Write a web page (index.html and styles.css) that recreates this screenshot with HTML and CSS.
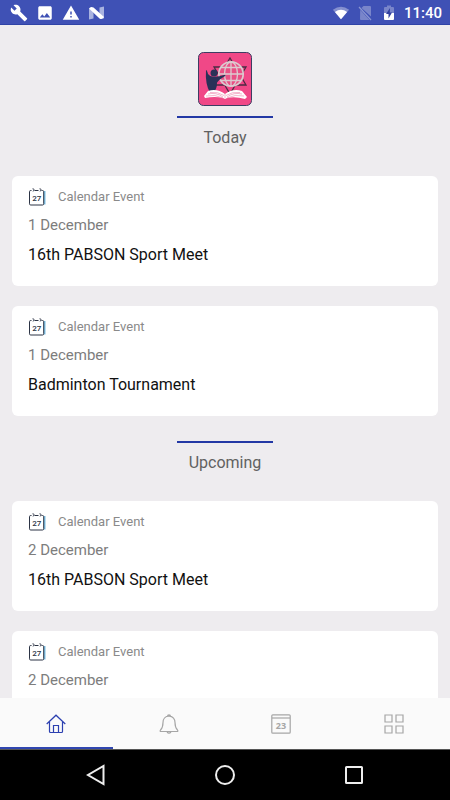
FILE: index.html
```
<!DOCTYPE html>
<html lang="en">
<head>
<meta charset="utf-8">
<meta name="viewport" content="width=device-width, initial-scale=1">
<title>Events</title>
<link rel="stylesheet" href="styles.css">
</head>
<body>
<svg class="defs" aria-hidden="true">
  <symbol id="calendar" viewBox="0 0 18 18">
    <path d="M16.700 3v13.500" stroke="#7cbfe2" stroke-width="1.600" fill="none"/>
    <path d="M3.500 2.500H2.700Q1.500 2.500 1.500 3.700V15.800Q1.500 17 2.700 17H14.500Q15.700 17 15.700 15.800V3.700Q15.700 2.500 14.500 2.500H13.500M6.500 2.500H10.500" fill="none" stroke="#2b3344" stroke-width="1"/>
    <path d="M4.500 .8q1.500-.3 1.500 1T4.800 3.300M11.500 .8q1.500-.3 1.500 1T11.800 3.300" fill="none" stroke="#2b3344" stroke-width=".9"/>
    <text x="8.800" y="12.500" text-anchor="middle" class="cal-number">27</text>
  </symbol>
</svg>

<header class="status">
  <div class="status-group notices">
    <svg width="18" height="18" viewBox="0 0 24 24" fill="#fff"><path d="M22.700 19l-9.100-9.100c.9-2.300.4-5-1.500-6.900-2-2-5-2.400-7.400-1.300L9 6 6 9 1.600 4.700C.4 7.100.9 10.100 2.900 12.100c1.900 1.900 4.600 2.400 6.900 1.500l9.100 9.100c.4.4 1 .4 1.400 0l2.300-2.300c.5-.4.5-1.100.1-1.400z"/></svg>
    <svg width="18" height="18" viewBox="0 0 24 24" fill="#fff"><path d="M21 19V5c0-1.100-.9-2-2-2H5c-1.100 0-2 .9-2 2v14c0 1.100.9 2 2 2h14c1.100 0 2-.9 2-2zM8.500 13.500l2.500 3 3.500-4.500 4.500 6H5l3.500-4.500z"/></svg>
    <svg width="18" height="18" viewBox="0 0 24 24" fill="#fff"><path d="M1 21h22L12 2 1 21zm12-3h-2v-2h2v2zm0-4h-2v-4h2v4z"/></svg>
    <svg width="18" height="18" viewBox="0 0 18 18"><path d="M1 4.500l4.500 1v9L1 15.500zM11.500 3.500L16 2.500v12l-4.500-1z" fill="#a9b3e0"/><path d="M1 4.500Q2.500 2 5.500 3.500L16 13q-1.500 3-4.500 1.500z" fill="#fff"/></svg>
  </div>
  <div class="status-group system">
    <svg width="18" height="18" viewBox="0 0 20 18"><path d="M10 16L1 5.500Q10-1.500 19 5.500z" fill="#8590cf"/><path d="M10 16L3.200 8Q10 3 16.800 8z" fill="#fff"/></svg>
    <svg width="18" height="18" viewBox="0 0 18 18"><path d="M7.500 2H14q1 0 1 1v9.500L5.500 4zM4.200 5.800L13.500 16H5q-1 0-1-1z" fill="#7985ca"/><path d="M3 3l12 13" stroke="#8b96d2" stroke-width="1.200"/></svg>
    <svg width="18" height="18" viewBox="0 0 18 18"><path d="M4 9V4q0-1 1-1h2V1.500h4V3h2q1 0 1 1v5z" fill="#7985ca"/><path d="M4 9h10v6q0 1-1 1H5q-1 0-1-1z" fill="#fff"/><path d="M10 4L6 10h2.500v4.500L12 8.500H9.800z" fill="#303f9f"/></svg>
    <time class="clock">11:40</time>
  </div>
</header>

<main class="feed">
  <svg class="logo" viewBox="0 0 54 54" role="img" aria-label="School logo">
    <rect x=".5" y=".5" width="53" height="53" rx="5" fill="#f04887" stroke="#3c3d63"/>
    <path d="M32 6L48 33H16zM32 42L16 15H48z" fill="none" stroke="#4a2b43" stroke-width="1.300"/>
    <circle cx="33" cy="22" r="12" fill="#e95085"/>
    <g fill="none" stroke="#dccbd0" stroke-width="1.300">
      <circle cx="33" cy="22" r="12.200" stroke-width="1.700"/>
      <ellipse cx="33" cy="22" rx="6.500" ry="12"/>
      <path d="M33 10v24M21 22h24M23 15.500h20M23 28.500h20"/>
    </g>
    <path d="M8 18q1 0 2 4 2 3 6 2.800 5 0 11-2l.5 1q-7 4-8.500 7 0 6-3 9l-4 1q-5-9-4-22.800z" fill="#2a3158"/>
    <circle cx="16" cy="21" r="3.500" fill="#2a3158"/>
    <path d="M6 44l4-5q9-3 17 3 8-6 17-3l5 6-2 2q-10-3-18-1l-2 1-2-1q-8-2-18 0z" fill="#fff"/>
    <path d="M27 42v4M10 42q8-2 15 3M12 40.500q8-1 14 3M44 42q-8-2-15 3M42 40.500q-8-1-14 3M8 44q9-2 17 2M46 44q-9-2-17 2" fill="none" stroke="#ef86ad" stroke-width=".6"/>
  </svg>

  <section class="group">
    <h2 class="heading">Today</h2>
    <article class="card">
      <p class="kind"><svg class="kind-icon" aria-hidden="true"><use href="#calendar"/></svg>Calendar Event</p>
      <p class="date">1 December</p>
      <h3 class="title">16th PABSON Sport Meet</h3>
    </article>
    <article class="card">
      <p class="kind"><svg class="kind-icon" aria-hidden="true"><use href="#calendar"/></svg>Calendar Event</p>
      <p class="date">1 December</p>
      <h3 class="title">Badminton Tournament</h3>
    </article>
  </section>

  <section class="group">
    <h2 class="heading">Upcoming</h2>
    <article class="card">
      <p class="kind"><svg class="kind-icon" aria-hidden="true"><use href="#calendar"/></svg>Calendar Event</p>
      <p class="date">2 December</p>
      <h3 class="title">16th PABSON Sport Meet</h3>
    </article>
    <article class="card">
      <p class="kind"><svg class="kind-icon" aria-hidden="true"><use href="#calendar"/></svg>Calendar Event</p>
      <p class="date">2 December</p>
    </article>
  </section>
</main>

<nav class="tabs">
  <button class="tab active" aria-label="Home"><svg width="20" height="20" viewBox="0 0 20 20"><path d="M.7 10L10 1.200 19.300 10M3.500 8v9.500q0 1 1 1h11q1 0 1-1V8M7.500 18.500V11.500h5v7"/></svg></button>
  <button class="tab" aria-label="Notifications"><svg width="20" height="20" viewBox="0 0 20 20"><path d="M8.500 2.300q0-1.500 1.500-1.500t1.500 1.500M10 2.200c-4 0-6 2.800-6 6.300 0 4-.5 5.500-2.500 7.500-.8 1-.3 1.500.5 1.500h16c.8 0 1.300-.5.5-1.500-2-2-2.500-3.500-2.500-7.500 0-3.500-2-6.300-6-6.300zM8 18q2 2.200 4 0"/></svg></button>
  <button class="tab" aria-label="Calendar"><svg width="20" height="20" viewBox="0 0 20 20"><rect x=".8" y=".8" width="18.400" height="18.400" rx="1"/><path d="M1 4h18"/><text x="10" y="15" text-anchor="middle" class="tab-number">23</text></svg></button>
  <button class="tab" aria-label="More"><svg width="20" height="20" viewBox="0 0 20 20"><path d="M1 1h7v7H1zM12 1h7v7h-7zM1 12h7v7H1zM12 12h7v7h-7z"/></svg></button>
</nav>

<footer class="keys">
  <button class="key" aria-label="Back"><svg width="22" height="22" viewBox="0 0 22 22"><path d="M18.500 2v18L3 11z"/></svg></button>
  <button class="key" aria-label="Home screen"><svg width="22" height="22" viewBox="0 0 22 22"><circle cx="11" cy="11" r="9"/></svg></button>
  <button class="key" aria-label="Recent apps"><svg width="22" height="22" viewBox="0 0 22 22"><rect x="3" y="3" width="16" height="16" rx=".5"/></svg></button>
</footer>
</body>
</html>
```
FILE: styles.css
```
* {
  box-sizing: border-box;
}

body {
  display: flex;
  flex-direction: column;
  height: 100vh;
  margin: 0;
  background: #eeecef;
  font-family: Roboto, "Liberation Sans", sans-serif;
}

h2, h3, p {
  margin: 0;
  font-weight: 400;
}

button {
  padding: 0;
  border: 0;
  background: none;
}

svg {
  display: block;
  flex: none;
}

.defs {
  display: none;
}

.status {
  display: flex;
  flex: none;
  justify-content: space-between;
  align-items: center;
  height: 25px;
  padding: 2px 8px 0 10px;
  border-bottom: 1px solid #2f43a6;
  background: #3f51b5;
  color: #fff;
}

.status-group {
  display: flex;
  align-items: center;
}

.notices {
  gap: 8px;
}

.system {
  gap: 6px;
}

.clock {
  font-size: 15px;
  font-weight: 500;
  line-height: 22px;
}

.feed {
  flex: 1;
  min-height: 0;
  padding: 27px 12px 0;
  overflow: hidden;
}

.logo {
  width: 54px;
  height: 54px;
  margin: 0 auto 10px;
}

.group {
  display: flex;
  flex-direction: column;
  gap: 20px;
  margin-bottom: 25px;
}

.heading {
  align-self: center;
  width: 96px;
  padding: 10px 0 8px;
  border-top: 2px solid #2338a5;
  color: #616161;
  font-size: 16px;
  line-height: 20px;
  text-align: center;
}

.card {
  padding: 11px 16px 20px;
  border-radius: 6px;
  background: #fff;
}

.kind {
  display: flex;
  align-items: center;
  gap: 12px;
  color: #8a8a8a;
  font-size: 13px;
  line-height: 20px;
}

.kind-icon {
  width: 18px;
  height: 18px;
}

.date {
  margin-top: 8px;
  color: #7d7d7d;
  font-size: 15px;
  line-height: 20px;
}

.title {
  margin-top: 9px;
  color: #111;
  font-size: 16px;
  line-height: 22px;
}

.cal-number {
  fill: #2b3344;
  font-size: 8px;
  font-weight: 500;
}

.tabs {
  display: grid;
  flex: none;
  grid-template-columns: repeat(4, 1fr);
  height: 52px;
  border-bottom: 1px solid #555;
  background: #fafafa;
}

.tab {
  display: flex;
  justify-content: center;
  align-items: center;
  padding-top: 2px;
  border-bottom: 2px solid transparent;
  color: #a6a6a6;
}

.tab.active {
  border-bottom-color: #3046b0;
  color: #2c40b0;
}

.tab svg {
  fill: none;
  stroke: currentColor;
  stroke-width: 1.2;
}

.tab-number {
  fill: currentColor;
  stroke: none;
  font-family: "Open Sans", sans-serif;
  font-size: 9px;
  font-weight: 700;
}

.keys {
  display: grid;
  flex: none;
  grid-template-columns: repeat(3, 1fr);
  height: 50px;
  padding: 0 32px;
  background: #000;
}

.key {
  display: flex;
  justify-content: center;
  align-items: center;
}

.key svg {
  fill: none;
  stroke: #eee;
  stroke-width: 2;
}
```
